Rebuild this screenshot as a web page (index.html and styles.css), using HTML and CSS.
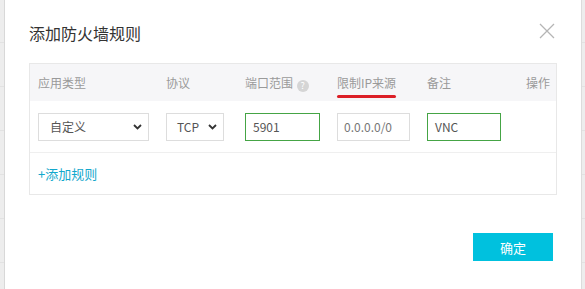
FILE: index.html
```html
<!DOCTYPE html>
<html>
<head>
    <meta charset="utf-8">
    <title>添加防火墙规则</title>
    <link rel="stylesheet" href="styles.css">
</head>
<body>
    <div class="dialog">
        <div class="dialog-head">
            <div class="dialog-title">添加防火墙规则</div>
            <svg class="close" width="16" height="16" viewBox="0 0 16 16">
                <path d="M1 1L15 15M15 1L1 15" stroke="#b5b5b5" stroke-width="1.3" fill="none"/>
            </svg>
        </div>

        <div class="rule-table">
            <div class="row head-row">
                <div class="cell">应用类型</div>
                <div class="cell">协议</div>
                <div class="cell">端口范围 <span class="help">?</span></div>
                <div class="cell"><span class="marked">限制IP来源</span></div>
                <div class="cell">备注</div>
                <div class="cell">操作</div>
            </div>
            <div class="row body-row">
                <div class="cell">
                    <div class="field select wide">自定义
                        <svg class="caret" width="9" height="6" viewBox="0 0 9 6"><path d="M1 1L4.5 4.5L8 1" stroke="#333" stroke-width="1.8" fill="none"/></svg>
                    </div>
                </div>
                <div class="cell">
                    <div class="field select narrow">TCP
                        <svg class="caret" width="9" height="6" viewBox="0 0 9 6"><path d="M1 1L4.5 4.5L8 1" stroke="#333" stroke-width="1.8" fill="none"/></svg>
                    </div>
                </div>
                <div class="cell"><div class="field ok port">5901</div></div>
                <div class="cell"><div class="field ip">0.0.0.0/0</div></div>
                <div class="cell"><div class="field ok note">VNC</div></div>
                <div class="cell"></div>
            </div>
            <div class="add-row">
                <a class="add-link">+添加规则</a>
            </div>
        </div>

        <div class="dialog-foot">
            <button class="btn-primary">确定</button>
        </div>
    </div>
</body>
</html>
```

FILE: styles.css
```css
html, body {
    height: 100%;
    margin: 0;
    padding: 0;
}

body {
    background: #ededed repeating-linear-gradient(to bottom, transparent 0, transparent 42px, #e2e2e2 42px, #e2e2e2 43px, transparent 43px, transparent 44px);
    font-family: "Noto Sans CJK SC", "Microsoft YaHei", sans-serif;
    font-size: 12px;
    color: #333;
}

.dialog {
    margin-left: 4px;
    width: 578px;
    height: 289px;
    box-sizing: border-box;
    background: #fff;
    border-left: 1px solid #d8d8d8;
    border-right: 1px solid #dcdcdc;
    padding: 0 24px;
}

.dialog-head {
    display: flex;
    justify-content: space-between;
    align-items: center;
    padding-top: 20px;
    height: 26px;
    margin-bottom: 17px;
}

.dialog-title {
    font-size: 16px;
    line-height: 26px;
    color: #333;
}

.close {
    margin-right: 2px;
    margin-top: -4px;
}

.rule-table {
    border: 1px solid #e8e8e8;
}

.row {
    display: grid;
    grid-template-columns: 128px 79px 92px 90px 99px 1fr;
    align-items: center;
}

.cell {
    padding-left: 8px;
}

.head-row {
    height: 37px;
    background: #f6f6f8;
    color: #9a9a9a;
}

.help {
    display: inline-block;
    width: 12px;
    height: 12px;
    border-radius: 50%;
    background: #d5d5d5;
    color: #fff;
    font-size: 9px;
    line-height: 12px;
    text-align: center;
    vertical-align: -1px;
    margin-left: 1px;
}

.marked {
    position: relative;
    display: inline-block;
}

.marked::after {
    content: "";
    position: absolute;
    left: 0;
    right: 0;
    bottom: -7px;
    height: 3px;
    border-radius: 2px;
    background: #dc1f27;
}

.body-row {
    height: 51px;
    border-bottom: 1px solid #efefef;
}

.field {
    height: 28px;
    box-sizing: border-box;
    border: 1px solid #dddddd;
    line-height: 26px;
    padding-left: 7px;
    color: #555;
    font-size: 12px;
}

.ok {
    border-color: #45a445;
}

.select {
    display: flex;
    justify-content: space-between;
    align-items: center;
    padding-right: 6px;
}

.wide {
    width: 111px;
    padding-left: 11px;
}

.narrow {
    width: 58px;
    padding-left: 10px;
}

.port {
    width: 75px;
}

.ip {
    width: 73px;
    padding-left: 6px;
    color: #777;
}

.note {
    width: 74px;
}

.add-row {
    height: 41px;
    display: flex;
    align-items: center;
    padding-left: 8px;
}

.add-link {
    color: #13a8cc;
    font-size: 13px;
}

.dialog-foot {
    display: flex;
    justify-content: flex-end;
    padding-right: 4px;
    margin-top: 38px;
}

.btn-primary {
    width: 80px;
    height: 28px;
    border: none;
    background: #00c1de;
    color: #fff;
    font-family: inherit;
    font-size: 13px;
}
```
